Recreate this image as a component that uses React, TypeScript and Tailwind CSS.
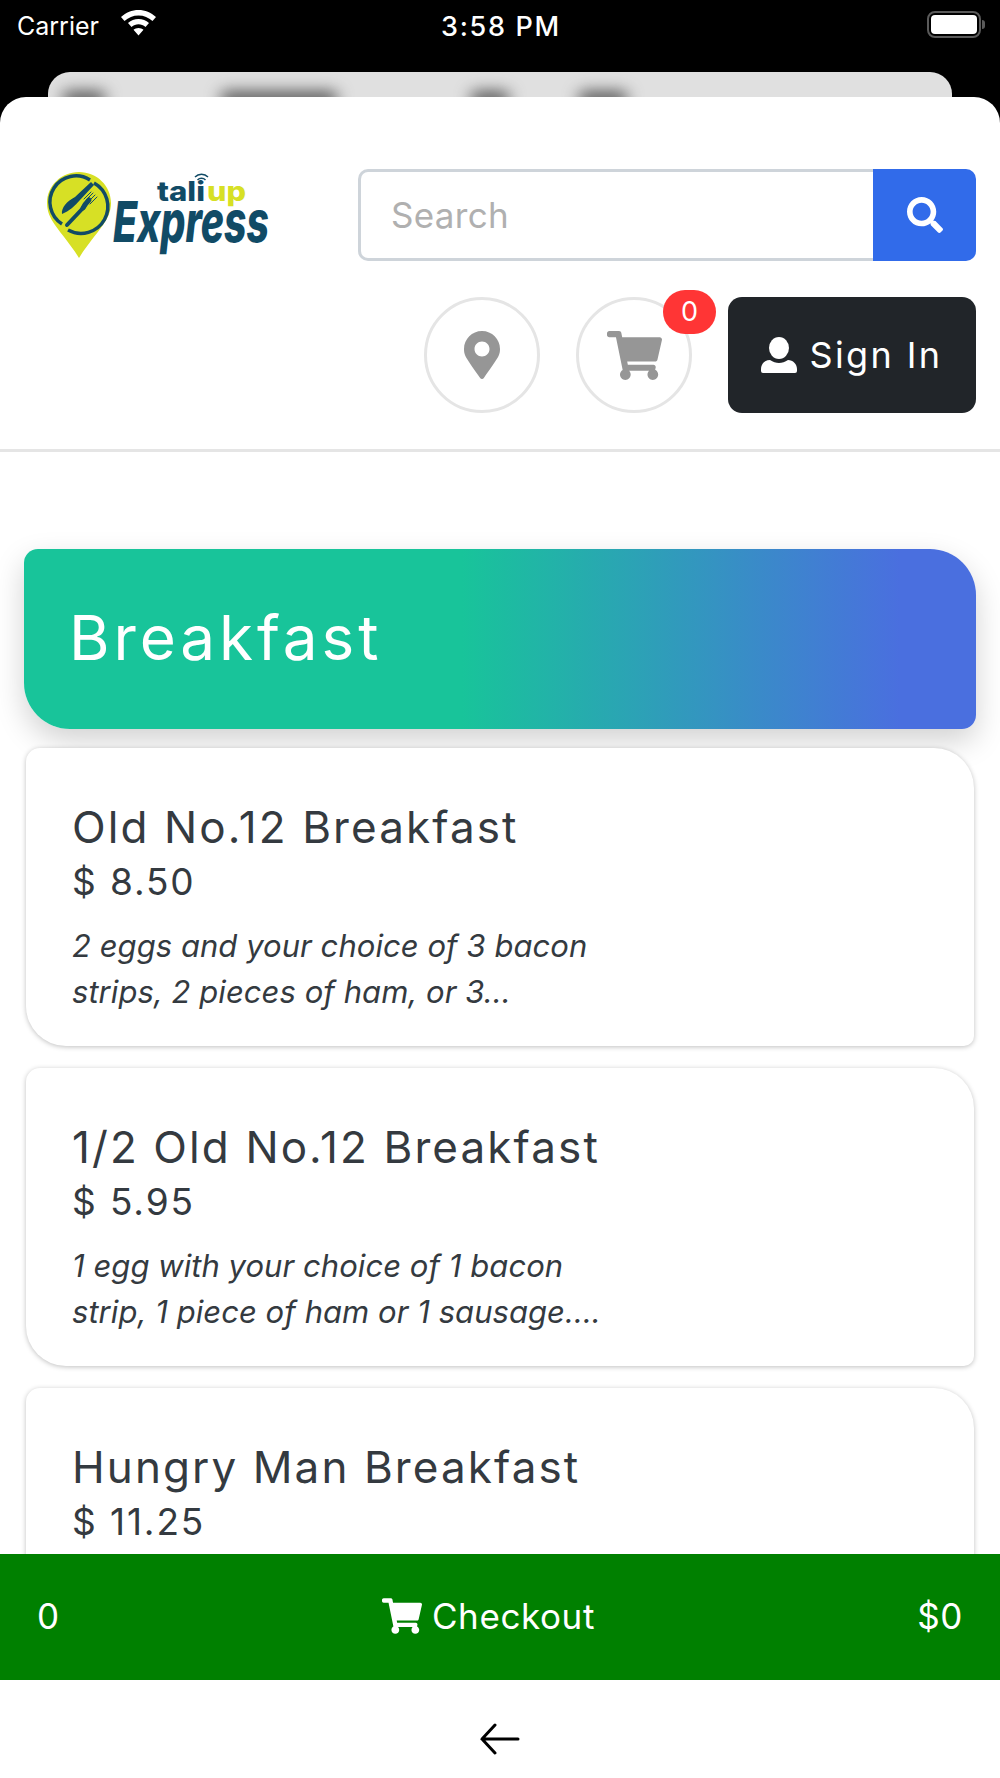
import { FaMapMarkerAlt, FaSearch, FaShoppingCart } from 'react-icons/fa'

const items = [
  {
    name: 'Old No.12 Breakfast',
    price: '$ 8.50',
    desc: ['2 eggs and your choice of 3 bacon', 'strips, 2 pieces of ham, or 3...'],
  },
  {
    name: '1/2 Old No.12 Breakfast',
    price: '$ 5.95',
    desc: ['1 egg with your choice of 1 bacon', 'strip, 1 piece of ham or 1 sausage....'],
  },
  { name: 'Hungry Man Breakfast', price: '$ 11.25', desc: ['', ''] },
]

function Logo() {
  return (
    <svg width="226" height="88" viewBox="0 0 226 88" className="shrink-0 overflow-visible">
      {/* pin */}
      <path
        d="M33 1C15 1 1 15 1 32c0 8 3 15 8 22 7 10 16 20 24 33 8-13 17-23 24-33 5-7 8-14 8-22C65 15 51 1 33 1z"
        fill="#d7e025"
      />
      {/* plate ring, split along the diagonal */}
      <path d="M44 9A25.500 25.500 0 0 0 16 53" fill="none" stroke="#114b66" strokeWidth="3.500" />
      <path d="M48 12A25.500 25.500 0 0 1 22 59" fill="none" stroke="#114b66" strokeWidth="3.500" />
      {/* knife */}
      <path d="M45 11L48 14 34 29C29 35 23 40 16 43 15 37 21 30 29 26z" fill="#114b66" />
      {/* fork */}
      <g stroke="#114b66" fill="none" strokeLinecap="round">
        <path d="M21 54L38 36" strokeWidth="4" />
        <path d="M37 37C39 33 41 31 43 29" strokeWidth="5" />
        <path d="M40 29L47 22M42 31L49 24M44 33L51 26M38 28L45 21" strokeWidth="1" />
      </g>
      <text
        x="111"
        y="30"
        textLength="48"
        lengthAdjust="spacingAndGlyphs"
        fontFamily="Inter, sans-serif"
        fontWeight="800"
        fontSize="27"
        fill="#114b66"
      >
        tali
      </text>
      <text
        x="161"
        y="30"
        textLength="39"
        lengthAdjust="spacingAndGlyphs"
        fontFamily="Inter, sans-serif"
        fontWeight="800"
        fontSize="27"
        fill="#d7e025"
      >
        up
      </text>
      <path d="M149 6a9 9 0 0 1 13 0M151.500 9a5.500 5.500 0 0 1 8 0" fill="none" stroke="#114b66" strokeWidth="1.500" />
      <text
        x="67"
        y="71"
        textLength="156"
        lengthAdjust="spacingAndGlyphs"
        fontFamily="Inter, sans-serif"
        fontWeight="800"
        fontStyle="italic"
        fontSize="57"
        fill="#114b66"
      >
        Express
      </text>
    </svg>
  )
}

// FA's user glyph has no gap between head and shoulders, the reference does
function UserIcon() {
  return (
    <svg width="36" height="36" viewBox="0 0 36 36" fill="#fff" className="shrink-0">
      <ellipse cx="18" cy="11" rx="10" ry="11" />
      <path d="M9 23c3 2 6 3 9 3s6-1 9-3c5 0 9 4 9 9v2a2 2 0 0 1-2 2H2a2 2 0 0 1-2-2v-2c0-5 4-9 9-9z" />
    </svg>
  )
}

function StatusBar() {
  return (
    <div className="h-[72px] shrink-0 bg-black text-white flex items-start justify-between pl-[17px] pr-[15px] pt-[9px] relative">
      <div className="flex items-center gap-[21px] text-[25px] leading-[34px]">
        <span>Carrier</span>
        <svg width="37" height="27" viewBox="0 0 37 27" className="-mt-[8px]">
          <path
            d="M18.500 1C12 1 6 3.500 1 8l3.500 4c4-3.500 8.500-5.500 14-5.500S28.500 8.500 32.500 12L36 8C31 3.500 25 1 18.500 1zM18.500 10c-4 0-7.500 1.500-10.500 4l3.500 4c2-1.700 4.500-2.700 7-2.700s5 1 7 2.700l3.500-4c-3-2.500-6.500-4-10.500-4zM18.500 19c-2 0-3.500.7-5 1.800l5 5.700 5-5.700c-1.500-1.100-3-1.800-5-1.800z"
            fill="#fff"
          />
        </svg>
      </div>
      <span className="absolute left-[441px] top-[10px] text-[27px] leading-[34px] font-medium tracking-[1.7px]">3:58 PM</span>
      <div className="flex items-center gap-[1px] mt-[2px]">
        <div className="w-[54px] h-[27px] rounded-[8px] border-2 border-[#5a5a5a] p-[2px]">
          <div className="w-full h-full rounded-[4px] bg-white" />
        </div>
        <div className="w-[3px] h-[9px] rounded-r-full bg-[#5a5a5a]" />
      </div>
    </div>
  )
}

function MenuCard({ name, price, desc }: (typeof items)[number]) {
  return (
    <div className="shrink-0 h-[298px] ml-[26px] mr-[26px] bg-white rounded-tl-[14px] rounded-tr-[40px] rounded-bl-[40px] rounded-br-[10px] shadow-[0_1px_5px_rgba(0,0,0,0.25)] pl-[46px] pt-[53px]">
      <div className="text-[44px] leading-[52px] tracking-[2.1px] text-[#343a40]">{name}</div>
      <div className="text-[37px] leading-[40px] tracking-[1.9px] text-[#343a40] mt-[9px]">{price}</div>
      <div className="mt-[21px] text-[31px] italic text-[#343a40] tracking-[0.05px]">
        {desc.map((line, i) => (
          <div key={i} className="h-[46px] leading-[46px]">{line}</div>
        ))}
      </div>
    </div>
  )
}

export default function App() {
  return (
    <div className="w-[1000px] h-[1778px] overflow-hidden flex flex-col bg-white font-['Inter',sans-serif]">
      <StatusBar />
      {/* sheet peeking from behind */}
      <div className="h-[25px] shrink-0 bg-black px-[48px]">
        <div className="relative h-full rounded-t-[22px] bg-[#e0e0e0] overflow-hidden">
          <div className="absolute left-[14px] top-[20px] w-[44px] h-[14px] rounded-full bg-[#444] blur-[8px]" />
          <div className="absolute left-[172px] top-[20px] w-[118px] h-[14px] rounded-full bg-[#444] blur-[8px]" />
          <div className="absolute left-[422px] top-[20px] w-[40px] h-[14px] rounded-full bg-[#444] blur-[8px]" />
          <div className="absolute left-[530px] top-[20px] w-[50px] h-[14px] rounded-full bg-[#444] blur-[8px]" />
        </div>
      </div>
      <div className="flex-1 min-h-0 flex flex-col bg-black">
        <div className="flex-1 min-h-0 flex flex-col bg-white rounded-t-[26px] overflow-hidden">
          {/* header */}
          <div className="shrink-0 h-[355px] border-b-[3px] border-[#e5e5e5] pt-[72px] pr-[24px]">
            <div className="flex items-center pl-[46px]">
              <Logo />
              <div className="ml-[86px] flex-1 flex h-[92px]">
                <div className="flex-1 border-[3px] border-r-0 border-[#ced4da] rounded-l-[10px] pl-[30px] flex items-center text-[35px] text-[#b0b0b0] tracking-[0.3px]">
                  Search
                </div>
                <div className="w-[103px] bg-[#316bea] rounded-r-[10px] flex items-center justify-center text-white">
                  <FaSearch size={36} />
                </div>
              </div>
            </div>
            <div className="mt-[36px] flex justify-end items-center gap-[36px]">
              <div className="w-[116px] h-[116px] rounded-full border-[3px] border-[#e5e5e5] flex items-center justify-center text-[#969696]">
                <FaMapMarkerAlt size={48} />
              </div>
              <div className="relative w-[116px] h-[116px] rounded-full border-[3px] border-[#e5e5e5] flex items-center justify-center text-[#969696]">
                <FaShoppingCart size={55} />
                <span className="absolute -top-[10px] -right-[27px] w-[53px] h-[44px] rounded-[22px] bg-[#ff3535] text-white text-[27px] flex items-center justify-center">
                  0
                </span>
              </div>
              <div className="w-[248px] h-[116px] rounded-[14px] bg-[#212529] text-white flex items-center justify-center gap-[12px] text-[36px] tracking-[2.4px]">
                <UserIcon />
                <span>Sign In</span>
              </div>
            </div>
          </div>

          {/* list */}
          <div className="flex-1 min-h-0 overflow-hidden pt-[97px] flex flex-col">
            <div className="shrink-0 h-[180px] mx-[24px] rounded-tl-[14px] rounded-tr-[46px] rounded-bl-[46px] rounded-br-[14px] bg-[linear-gradient(to_right,#18c49a_46%,#4a6fdf_92%)] shadow-[0_12px_30px_rgba(0,0,0,0.18)] flex items-center pl-[45px] pb-[4px] text-white text-[62px] tracking-[3.9px]">
              Breakfast
            </div>
            <div className="flex-1 min-h-0 pt-[19px] flex flex-col gap-[22px] overflow-hidden">
              {items.map((item) => (
                <MenuCard key={item.name} {...item} />
              ))}
            </div>
          </div>

          {/* checkout */}
          <div className="shrink-0 h-[126px] bg-[#008000] text-white flex items-center justify-between px-[37px] pb-[2px] text-[35px] tracking-[0.6px]">
            <span>0</span>
            <span className="flex items-center gap-[10px]">
              <FaShoppingCart size={40} />
              Checkout
            </span>
            <span>$0</span>
          </div>

          {/* back */}
          <div className="shrink-0 h-[98px] pt-[20px] flex items-center justify-center">
            <svg width="40" height="32" viewBox="0 0 40 32" fill="none" stroke="#000" strokeWidth="3" strokeLinecap="round">
              <path d="M2 16h36M15 2L2 16l13 14" />
            </svg>
          </div>
        </div>
      </div>
    </div>
  )
}
